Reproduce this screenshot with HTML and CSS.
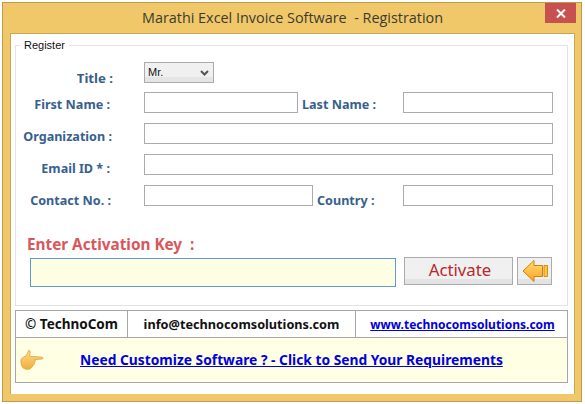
FILE: index.html
```html
<!DOCTYPE html>
<html lang="en">
<head>
<meta charset="utf-8">
<title>Registration</title>
<link rel="stylesheet" href="styles.css">
</head>
<body>
<div class="window">
  <header class="titlebar">
    <h1 class="title">Marathi Excel Invoice Software&nbsp; - Registration</h1>
    <button class="close" type="button" aria-label="Close">
      <svg width="10" height="9" viewBox="0 0 10 9"><path d="M1 .5 9 8.500M9 .5 1 8.500" stroke="#fff" stroke-width="2" fill="none"/></svg>
    </button>
  </header>
  <main class="panel">
    <fieldset class="group">
      <legend class="legend">Register</legend>
      <div class="form">
        <label class="lbl lbl-title">Title :</label>
        <div class="span3"><div class="select">Mr.<svg class="chev" width="9" height="6" viewBox="0 0 9 6"><path d="M1 1 4.500 4.500 8 1" stroke="#555" stroke-width="2" fill="none"/></svg></div></div>
        <label class="lbl lbl-first">First Name :</label>
        <div class="input"></div>
        <label class="lbl2 lbl-last">Last Name :</label>
        <div class="input"></div>
        <label class="lbl lbl-org">Organization :</label>
        <div class="input span3"></div>
        <label class="lbl lbl-email">Email ID * :</label>
        <div class="input span3"></div>
        <label class="lbl lbl-contact">Contact No. :</label>
        <div class="input input-contact"></div>
        <label class="lbl2 lbl-country">Country :</label>
        <div class="input"></div>
      </div>
      <div class="key-label">Enter Activation Key &nbsp;:</div>
      <div class="key-row">
        <div class="key-input"></div>
        <button class="btn btn-activate" type="button">Activate</button>
        <button class="btn btn-arrow" type="button" aria-label="Back">
          <svg width="26" height="24" viewBox="0 0 26 24">
            <defs><linearGradient id="arrowFill" x1="0" y1="0" x2="0" y2="1"><stop offset="0" stop-color="#ffe070"/><stop offset="1" stop-color="#ffa024"/></linearGradient></defs>
            <path d="M1 12 12 1.500V6.500H20.500V17.500H12V22.500Z" fill="url(#arrowFill)" stroke="#d0820c"/>
            <path d="M22 6.500H25.500V17.500H22Z" fill="#ffc83a" stroke="#d58e10"/>
          </svg>
        </button>
      </div>
    </fieldset>
    <section class="footer">
      <div class="info">
        <div class="cell cell-brand">© TechnoCom</div>
        <div class="cell cell-mail">info@technocomsolutions.com</div>
        <div class="cell cell-web"><a href="#">www.technocomsolutions.com</a></div>
      </div>
      <div class="promo">
        <svg class="hand" width="24" height="23" viewBox="0 0 25 24">
          <defs><linearGradient id="handFill" x1="0" y1="0" x2="0" y2="1"><stop offset="0" stop-color="#ffdc80"/><stop offset="1" stop-color="#efae42"/></linearGradient></defs>
          <path d="M1 11C2 9 5 8 7 6L9 1.500C10.500 1 11 3 10.500 5L10 7.500L23 8.500C24.500 9 24 10.500 23 10.500L15.500 11C16.500 12 16 13.500 15 14C15.500 15.500 14.500 16.500 13.500 16.500C13.500 18.500 12.500 19 11.500 19.500C11 21 9 21.500 6 21C3 20.500 .500 18 1 11Z" fill="url(#handFill)" stroke="#d9a040" stroke-width=".8"/>
        </svg>
        <a href="#" class="promo-link">Need Customize Software ? - Click to Send Your Requirements</a>
      </div>
    </section>
  </main>
</div>
</body>
</html>
```
FILE: styles.css
```css
* { box-sizing: border-box; }
html, body { margin: 0; padding: 0; background: #fff; }
body { width: 585px; height: 404px; padding: 2px 3px 2px 2px; font-family: "Noto Sans", "Open Sans", sans-serif; }
.window { width: 580px; height: 400px; background: #f0c869; border: 1px solid #bc9c4e; display: flex; flex-direction: column; padding: 0 6px 7px 7px; }
.titlebar { height: 30px; position: relative; display: flex; align-items: center; justify-content: center; flex: none; }
.title { margin: 0 0 2px 0; font-family: "Open Sans", sans-serif; font-weight: 400; font-size: 14.400px; color: #3c3a30; }
.close { position: absolute; right: -1px; top: 0; width: 31px; height: 20px; border: 0; padding: 0; background: #c75050; display: flex; align-items: center; justify-content: center; }
.panel { flex: 1; background: #fff; border: 1px solid #c9a94f; border-bottom: 0; padding: 5px 6px 0 4px; }
.group { margin: 0; padding: 0; border: 1px solid #e3e3e3; height: 267px; display: block; min-width: 0; position: relative; }
.legend { margin-left: 4px; padding: 0 4px; font-size: 11px; line-height: 12px; color: #111; font-family: "Liberation Sans", sans-serif; }
.form { display: grid; grid-template-columns: 128px 154px 105px 150px; grid-template-rows: 20px 21px 21px 21px 21px; row-gap: 10px; margin-top: 11px; }
.span3 { grid-column: span 3; }
.lbl, .lbl2 { font-weight: 700; font-size: 12.600px; color: #37608f; line-height: 22px; white-space: nowrap; }
.lbl { text-align: right; padding-right: 32px; }
.lbl2 { padding-left: 4px; }
.lbl-title { padding-top: 5px; padding-right: 31px; font-size: 13.200px; }
.lbl-first, .lbl-last { padding-top: 2px; }
.lbl-first { padding-right: 34px; }
.lbl-org { padding-top: 3px; }
.lbl-email { padding-top: 4px; padding-right: 34px; }
.lbl-contact { padding-top: 5px; padding-right: 33px; }
.lbl-country { padding-top: 5px; padding-left: 19px; }
.input { background: #fff; border: 1px solid #ababab; }
.input-contact { margin-right: -15px; }
.select { width: 70px; height: 21px; border: 1px solid #ababab; background: linear-gradient(#f0f0f0 0 75%, #e5e5e5 75%); font-family: "Liberation Sans", sans-serif; font-size: 11px; color: #111; line-height: 19px; padding-left: 3px; position: relative; }
.chev { position: absolute; right: 4px; top: 7px; }
.key-label { margin: 28px 0 0 11px; font-weight: 700; font-size: 15.300px; line-height: 20px; color: #d9565c; }
.key-row { display: flex; margin: 3px 0 0 14px; align-items: flex-start; }
.key-input { width: 366px; height: 29px; background: #ffffe3; border: 1px solid #5b9bd5; margin-top: 1px; }
.btn { height: 28px; border: 1px solid #ababab; background: linear-gradient(#f0f0f0 0 80%, #e3e3e3 80%); padding: 0; display: flex; align-items: center; justify-content: center; }
.btn-activate { width: 109px; margin-left: 8px; padding: 0 0 3px 3px; font-family: "Noto Sans", sans-serif; font-size: 16.800px; color: #b9282d; }
.btn-arrow { width: 35px; margin-left: 4px; }
.btn-arrow svg { display: block; }
.footer { margin-top: 4px; width: 553px; border: 1px solid #a6a6a6; background: #fff; }
.info { display: flex; height: 27px; border-bottom: 1px solid #a6a6a6; }
.cell { display: flex; align-items: center; justify-content: center; font-weight: 700; font-size: 12.700px; color: #111; white-space: nowrap; }
.cell-brand { width: 112px; border-right: 1px solid #a6a6a6; font-size: 13.500px; }
.cell-mail { width: 228px; border-right: 1px solid #a6a6a6; }
.cell-web { flex: 1; padding-left: 2px; font-size: 12px; }
.cell-web a { color: #0000e0; }
.promo { height: 44px; background: #ffffe3; display: flex; align-items: center; position: relative; padding-left: 4px; }
.hand { flex: none; }
.promo-link { margin: 0 0 2px 36px; font-weight: 700; font-size: 13.800px; color: #0000e0; white-space: nowrap; }
```
